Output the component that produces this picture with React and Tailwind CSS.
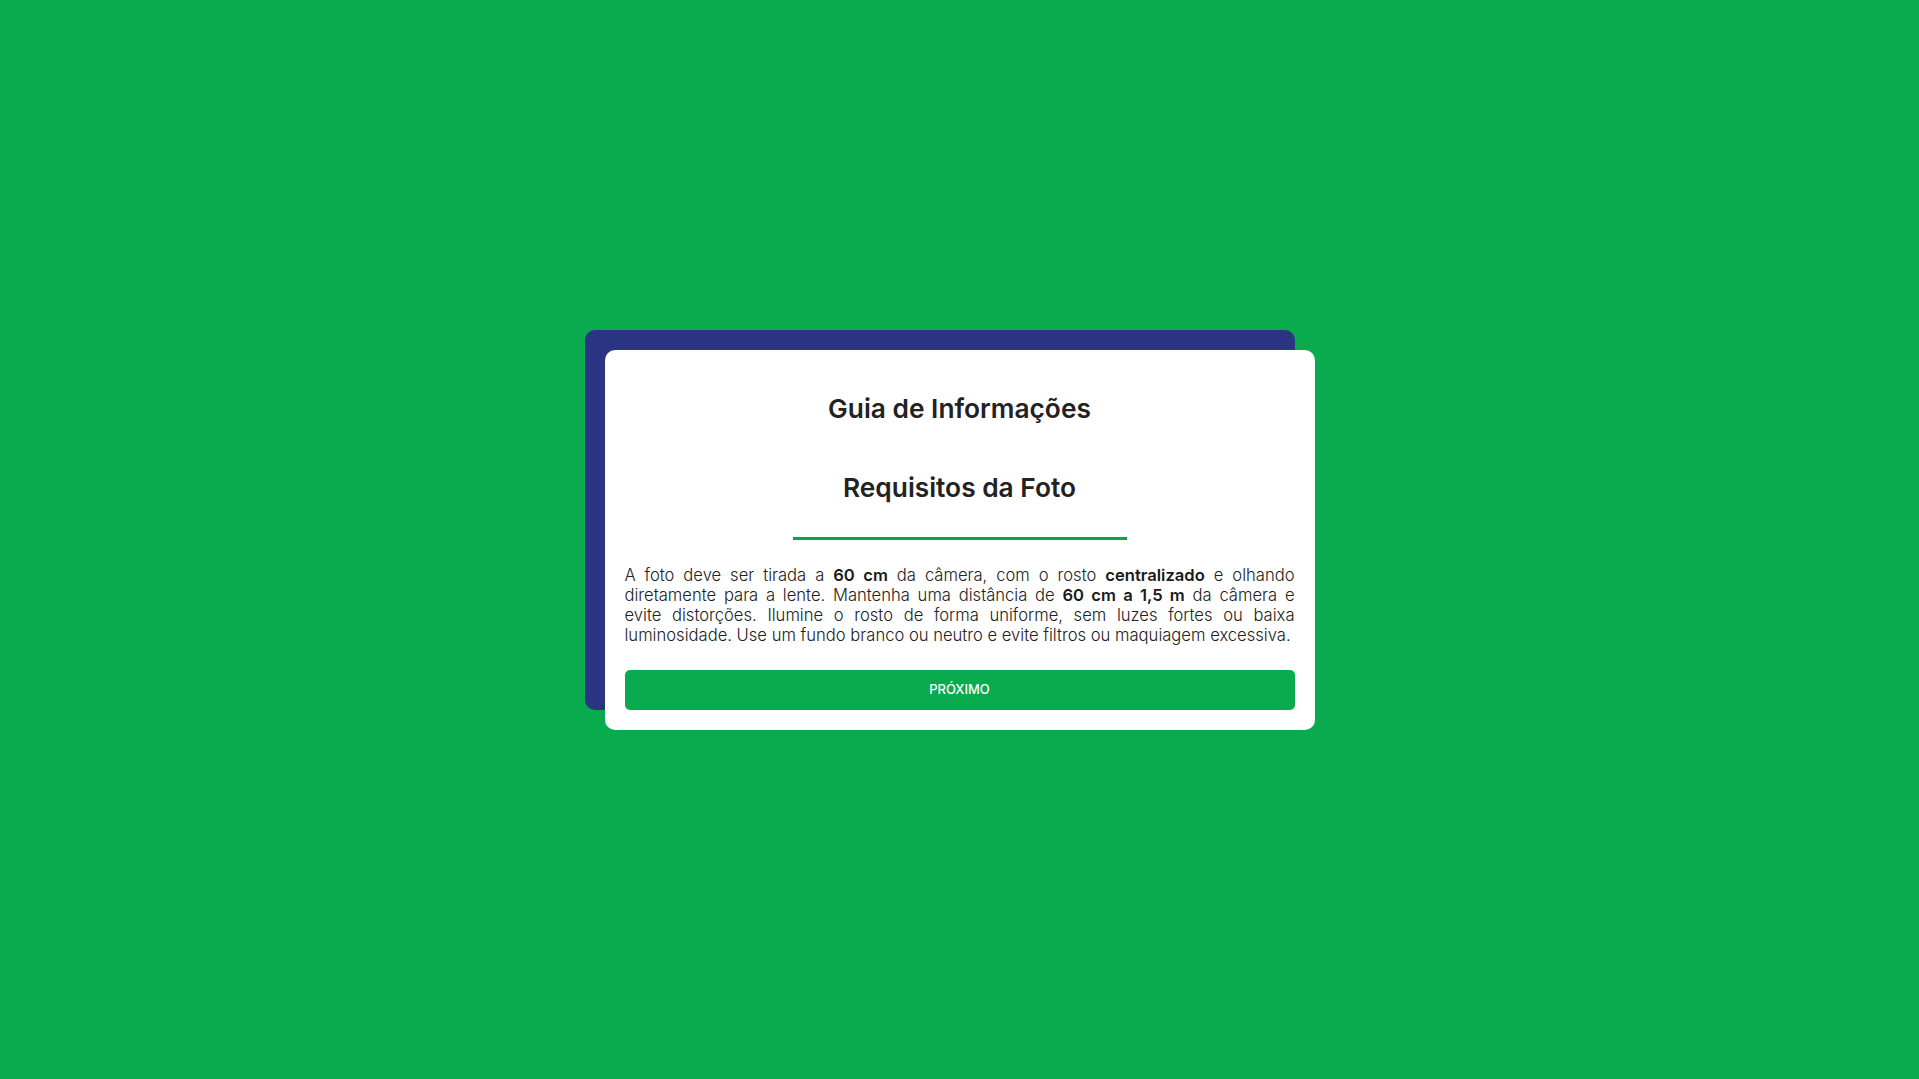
export default function App() {
  const font = { fontFamily: "Inter, 'Noto Sans', sans-serif" };
  return (
    <div
      className="w-full h-[1079px] bg-[#09ab4e] flex items-center justify-center"
      style={font}
    >
      <div className="relative w-[710px]">
        <div className="absolute -top-5 -left-5 w-[710px] h-[380px] rounded-[10px] bg-[#2b3383]" />
        <div className="relative bg-white rounded-[10px] w-[710px] h-[380px] px-5 pt-5 pb-5 flex flex-col">
          <h1 className="text-center text-[26.3px] leading-[36px] font-semibold text-[#222222] mt-[21px]">
            Guia de Informações
          </h1>
          <h2 className="text-center text-[26.3px] leading-[36px] font-semibold text-[#222222] mt-[43px]">
            Requisitos da Foto
          </h2>
          <div className="mx-auto mt-[31px] w-[334px] h-[3px] bg-[#09a54c]" />
          <p className="mt-[25px] text-[16.6px] leading-[20px] font-light text-[#222222]">
            <span className="block text-justify [text-align-last:justify]">
              A foto deve ser tirada a <b className="font-semibold text-[#1a1a1a]">60 cm</b> da câmera, com o rosto{" "}
              <b className="font-semibold text-[#1a1a1a]">centralizado</b> e olhando
            </span>
            <span className="block text-justify [text-align-last:justify]">
              diretamente para a lente. Mantenha uma distância de{" "}
              <b className="font-semibold text-[#1a1a1a]">60 cm a 1,5 m</b> da câmera e
            </span>
            <span className="block text-justify [text-align-last:justify]">
              evite distorções. Ilumine o rosto de forma uniforme, sem luzes fortes ou baixa
            </span>
            <span className="block">
              luminosidade. Use um fundo branco ou neutro e evite filtros ou maquiagem excessiva.
            </span>
          </p>
          <button className="mt-auto h-[40px] w-full rounded-[5px] bg-[#09ab4e] text-white text-[13px] font-medium">
            PRÓXIMO
          </button>
        </div>
      </div>
    </div>
  );
}
